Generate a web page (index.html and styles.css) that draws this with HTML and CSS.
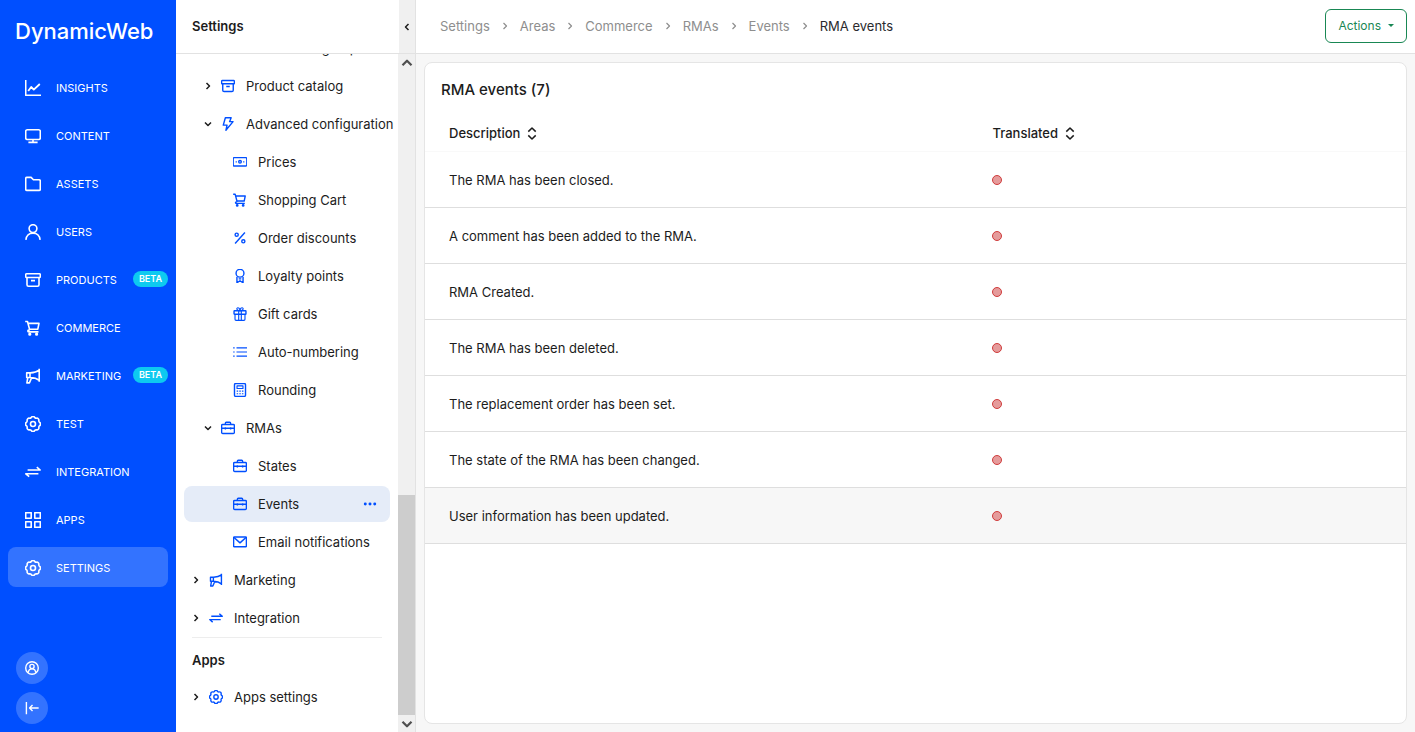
FILE: index.html
```html
<!DOCTYPE html>
<html lang="en">
<head>
<meta charset="utf-8">
<title>RMA events</title>
<link rel="stylesheet" href="styles.css">
</head>
<body>
<svg class="sprite" aria-hidden="true">
  <symbol id="insights" viewBox="0 0 16 16"><path d="M.7 0v15.2H16"/><path d="M3.2 11l3-4 2.6 2.6 6-5.6" stroke-width="1.8"/></symbol>
  <symbol id="monitor" viewBox="0 0 16 16"><rect x=".7" y="1.7" width="14.6" height="9.8" rx="1.6"/><path d="M8 11.5v2.6M3.4 14.4h9.2"/></symbol>
  <symbol id="folder" viewBox="0 0 16 16"><path d="M.7 2.6c0-.7.5-1.2 1.2-1.2h4.2l2.3 2.4h5.7c.7 0 1.2.5 1.2 1.2v8.2c0 .7-.5 1.2-1.2 1.2H1.9c-.7 0-1.2-.5-1.2-1.2z"/></symbol>
  <symbol id="user" viewBox="0 0 16 16"><circle cx="8" cy="4.6" r="3.9"/><path d="M.9 15.8c.4-4 3.2-6.700 7.100-6.700s6.700 2.700 7.100 6.700"/></symbol>
  <symbol id="archive" viewBox="0 0 16 16"><rect x=".7" y="1.7" width="14.6" height="3.8" rx=".9"/><path d="M2 5.600v7.200c0 .9.600 1.500 1.500 1.500h9c.9 0 1.500-.6 1.500-1.500V5.600M6 8.600h4"/></symbol>
  <symbol id="cart" viewBox="0 0 16 16"><path d="M.2 1.500h2.300l2 7.600c.2.500-.2.900-.7 1-1.300.2-1.300 1.800 0 1.800h9.700M3 3.400h11l-1.200 5.800H4.500"/><circle cx="4.800" cy="14.200" r=".8"/><circle cx="11.600" cy="14.200" r=".8"/></symbol>
  <symbol id="megaphone" viewBox="0 0 16 16"><path d="M14.200.8v13M14.200 2.200C11.500 4.300 8.700 4.800 5.200 4.900H1.700v4.600h3.500c3.500.1 6.300.7 9 2.900M5 4.900v4.600M2.800 9.500l-.9 5.400h2.500l2.200-5.200"/></symbol>
  <symbol id="gear" viewBox="0 0 16 16"><path d="M6.200 1.600a2 2 0 0 1 3.600 0 2 2 0 0 0 1.500.6 2 2 0 0 1 2.500 2.500 2 2 0 0 0 .6 1.500 2 2 0 0 1 0 3.600 2 2 0 0 0-.6 1.500 2 2 0 0 1-2.500 2.500 2 2 0 0 0-1.500.6 2 2 0 0 1-3.600 0 2 2 0 0 0-1.500-.6 2 2 0 0 1-2.500-2.500 2 2 0 0 0-.6-1.500 2 2 0 0 1 0-3.600 2 2 0 0 0 .6-1.500 2 2 0 0 1 2.500-2.500 2 2 0 0 0 1.500-.6z"/><circle cx="8" cy="8" r="2.500"/></symbol>
  <symbol id="swap" viewBox="0 0 16 16"><path d="M2.600 6H15.200L11.800 3.100M13.400 9.800H.8l3.400 2.900"/></symbol>
  <symbol id="grid" viewBox="0 0 16 16"><path d="M.7.7h5.500v5.500H.7zM9.800.7h5.500v5.500H9.800zM.7 9.800h5.500v5.500H.7zM9.800 9.800h5.500v5.500H9.800z"/></symbol>
  <symbol id="profile" viewBox="0 0 16 16"><circle cx="8" cy="8" r="7.200"/><circle cx="8" cy="6.300" r="2.400"/><path d="M3.700 13.200c.3-2.500 2-4.200 4.300-4.200s4 1.700 4.300 4.200"/></symbol>
  <symbol id="collapse" viewBox="0 0 16 16"><path d="M1.600 1v14M15.600 8H5.600M8.600 4.600L5.200 8l3.400 3.400"/></symbol>
  <symbol id="bolt" viewBox="0 0 16 16"><path d="M5 .8h6.600L9.800 5.300h4L5.600 15.200l1.300-5.900H2.600z"/></symbol>
  <symbol id="money" viewBox="0 0 16 16"><rect x=".2" y="3" width="15.600" height="9.600" rx="1.200"/><circle cx="8" cy="7.800" r="1.500"/><path d="M3 7.800h1.400M11.600 7.800H13"/></symbol>
  <symbol id="percent" viewBox="0 0 16 16"><path d="M13.600 1.800L2.400 14.200"/><circle cx="4.200" cy="4.200" r="1.800"/><circle cx="11.800" cy="11.800" r="1.800"/></symbol>
  <symbol id="award" viewBox="0 0 16 16"><circle cx="8" cy="4.800" r="4.500"/><path d="M4.500 9v6.800L8 13.400l3.500 2.400V9M6.500 11.300h3"/></symbol>
  <symbol id="gift" viewBox="0 0 16 16"><rect x="1.200" y="4.300" width="13.600" height="3.900" rx=".6"/><path d="M2.300 8.200v5.900c0 .7.500 1.200 1.200 1.200h9c.7 0 1.200-.5 1.200-1.200V8.200M6.500 4.300v11M9.500 4.300v11M7.800 4.300C3.500 4 3.800.9 5.600.9c1.500 0 2.200 1.500 2.400 3.400C8.200 2.400 8.900.9 10.400.9c1.800 0 2.100 3.100-2.200 3.400" stroke-width="1.300"/></symbol>
  <symbol id="list" viewBox="0 0 16 16"><path d="M4 3.300h12M4 8h12M4 12.700h12M.2 3.300h1.700M.2 8h1.700M.2 12.700h1.700" stroke-width="1.200"/></symbol>
  <symbol id="calculator" viewBox="0 0 16 16"><rect x="1.700" y=".7" width="12.600" height="14.600" rx="1.200"/><path d="M4.600 3.300h6.800v3H4.600zM4.200 9.300h1.700M7.200 9.300h1.700M10.200 9.300h1.700M4.200 12.300h1.700M7.200 12.300h1.700M10.200 12.300h1.700" stroke-width="1.300"/></symbol>
  <symbol id="briefcase" viewBox="0 0 16 16"><rect x=".7" y="4" width="14.600" height="10.200" rx="1.200"/><path d="M5 4V2.500c0-.6.400-1 1-1h4c.6 0 1 .4 1 1V4M.7 8.300h14.600M5 7v2.800M11 7v2.800"/></symbol>
  <symbol id="mail" viewBox="0 0 16 16"><rect x=".7" y="2.200" width="14.600" height="11.200" rx=".8"/><path d="M1.200 2.800L8 9l6.800-6.200"/></symbol>
  <symbol id="dots" viewBox="0 0 16 16"><g fill="currentColor" stroke="none"><circle cx="2.600" cy="8" r="1.700"/><circle cx="8" cy="8" r="1.700"/><circle cx="13.400" cy="8" r="1.700"/></g></symbol>
  <symbol id="chevron" viewBox="0 0 8 8"><path d="M2.500 1L5.500 4l-3 3"/></symbol>
  <symbol id="sort" viewBox="0 0 10 14"><path d="M1 5l4-4 4 4M1 9l4 4 4-4"/></symbol>
</svg>

<div class="app">
  <nav class="rail" aria-label="Areas">
    <a class="logo" href="#">DynamicWeb</a>
    <ul class="rail-list">
      <li><a class="rail-item" href="#"><svg class="icon"><use href="#insights"/></svg>INSIGHTS</a></li>
      <li><a class="rail-item" href="#"><svg class="icon"><use href="#monitor"/></svg>CONTENT</a></li>
      <li><a class="rail-item" href="#"><svg class="icon"><use href="#folder"/></svg>ASSETS</a></li>
      <li><a class="rail-item" href="#"><svg class="icon"><use href="#user"/></svg>USERS</a></li>
      <li><a class="rail-item" href="#"><svg class="icon"><use href="#archive"/></svg>PRODUCTS<span class="badge">BETA</span></a></li>
      <li><a class="rail-item" href="#"><svg class="icon"><use href="#cart"/></svg>COMMERCE</a></li>
      <li><a class="rail-item" href="#"><svg class="icon"><use href="#megaphone"/></svg>MARKETING<span class="badge">BETA</span></a></li>
      <li><a class="rail-item" href="#"><svg class="icon"><use href="#gear"/></svg>TEST</a></li>
      <li><a class="rail-item" href="#"><svg class="icon"><use href="#swap"/></svg>INTEGRATION</a></li>
      <li><a class="rail-item" href="#"><svg class="icon"><use href="#grid"/></svg>APPS</a></li>
      <li><a class="rail-item active" href="#" aria-current="page"><svg class="icon"><use href="#gear"/></svg>SETTINGS</a></li>
    </ul>
    <div class="rail-foot">
      <button class="round" type="button" aria-label="Profile"><svg class="icon"><use href="#profile"/></svg></button>
      <button class="round" type="button" aria-label="Collapse menu"><svg class="icon"><use href="#collapse"/></svg></button>
    </div>
  </nav>

  <aside class="panel">
    <header class="panel-head">
      <h2 class="panel-title">Settings</h2>
      <button class="panel-toggle" type="button" aria-label="Hide panel"><svg class="icon chevron left"><use href="#chevron"/></svg></button>
    </header>
    <div class="panel-body">
      <div class="tree">
        <a class="row level-2" href="#"><span class="twist"></span><svg class="icon"><use href="#mail"/></svg>Validation groups</a>
        <a class="row level-1" href="#"><span class="twist"><svg class="icon chevron"><use href="#chevron"/></svg></span><svg class="icon"><use href="#archive"/></svg>Product catalog</a>
        <a class="row level-1" href="#"><span class="twist"><svg class="icon chevron down"><use href="#chevron"/></svg></span><svg class="icon"><use href="#bolt"/></svg>Advanced configuration</a>
        <a class="row level-2" href="#"><span class="twist"></span><svg class="icon"><use href="#money"/></svg>Prices</a>
        <a class="row level-2" href="#"><span class="twist"></span><svg class="icon"><use href="#cart"/></svg>Shopping Cart</a>
        <a class="row level-2" href="#"><span class="twist"></span><svg class="icon"><use href="#percent"/></svg>Order discounts</a>
        <a class="row level-2" href="#"><span class="twist"></span><svg class="icon"><use href="#award"/></svg>Loyalty points</a>
        <a class="row level-2" href="#"><span class="twist"></span><svg class="icon"><use href="#gift"/></svg>Gift cards</a>
        <a class="row level-2" href="#"><span class="twist"></span><svg class="icon"><use href="#list"/></svg>Auto-numbering</a>
        <a class="row level-2" href="#"><span class="twist"></span><svg class="icon"><use href="#calculator"/></svg>Rounding</a>
        <a class="row level-1" href="#"><span class="twist"><svg class="icon chevron down"><use href="#chevron"/></svg></span><svg class="icon"><use href="#briefcase"/></svg>RMAs</a>
        <a class="row level-2" href="#"><span class="twist"></span><svg class="icon"><use href="#briefcase"/></svg>States</a>
        <div class="row level-2 selected"><span class="twist"></span><svg class="icon"><use href="#briefcase"/></svg><a class="row-link" href="#" aria-current="page">Events</a><button class="more" type="button" aria-label="More"><svg class="icon"><use href="#dots"/></svg></button></div>
        <a class="row level-2" href="#"><span class="twist"></span><svg class="icon"><use href="#mail"/></svg>Email notifications</a>
        <a class="row" href="#"><span class="twist"><svg class="icon chevron"><use href="#chevron"/></svg></span><svg class="icon"><use href="#megaphone"/></svg>Marketing</a>
        <a class="row" href="#"><span class="twist"><svg class="icon chevron"><use href="#chevron"/></svg></span><svg class="icon"><use href="#swap"/></svg>Integration</a>
        <h3 class="tree-heading">Apps</h3>
        <a class="row" href="#"><span class="twist"><svg class="icon chevron"><use href="#chevron"/></svg></span><svg class="icon"><use href="#gear"/></svg>Apps settings</a>
      </div>
      <div class="scrollbar">
        <button class="scroll-arrow" type="button" aria-label="Scroll up"><svg class="icon chevron up"><use href="#chevron"/></svg></button>
        <div class="scroll-track"><div class="scroll-thumb"></div></div>
        <button class="scroll-arrow" type="button" aria-label="Scroll down"><svg class="icon chevron down"><use href="#chevron"/></svg></button>
      </div>
    </div>
  </aside>

  <div class="content">
    <header class="topbar">
      <nav class="crumbs" aria-label="Breadcrumb">
        <a href="#">Settings</a><svg class="icon chevron"><use href="#chevron"/></svg>
        <a href="#">Areas</a><svg class="icon chevron"><use href="#chevron"/></svg>
        <a href="#">Commerce</a><svg class="icon chevron"><use href="#chevron"/></svg>
        <a href="#">RMAs</a><svg class="icon chevron"><use href="#chevron"/></svg>
        <a href="#">Events</a><svg class="icon chevron"><use href="#chevron"/></svg>
        <span class="current">RMA events</span>
      </nav>
      <button class="actions" type="button">Actions<span class="caret"></span></button>
    </header>
    <main class="main">
      <section class="card">
        <h1 class="card-title">RMA events (7)</h1>
        <table class="table">
          <thead>
            <tr>
              <th scope="col"><button class="sort" type="button">Description<svg class="icon"><use href="#sort"/></svg></button></th>
              <th scope="col"><button class="sort" type="button">Translated<svg class="icon"><use href="#sort"/></svg></button></th>
            </tr>
          </thead>
          <tbody>
            <tr><td>The RMA has been closed.</td><td><span class="status"></span></td></tr>
            <tr><td>A comment has been added to the RMA.</td><td><span class="status"></span></td></tr>
            <tr><td>RMA Created.</td><td><span class="status"></span></td></tr>
            <tr><td>The RMA has been deleted.</td><td><span class="status"></span></td></tr>
            <tr><td>The replacement order has been set.</td><td><span class="status"></span></td></tr>
            <tr><td>The state of the RMA has been changed.</td><td><span class="status"></span></td></tr>
            <tr class="hovered"><td>User information has been updated.</td><td><span class="status"></span></td></tr>
          </tbody>
        </table>
      </section>
    </main>
  </div>
</div>
</body>
</html>
```
FILE: styles.css
```css
* {
  box-sizing: border-box;
}

body {
  margin: 0;
  font-family: Inter, "Liberation Sans", sans-serif;
  font-size: 13px;
  line-height: 20px;
  color: #1c1c1c;
  background: #fff;
}

a {
  color: inherit;
  text-decoration: none;
}

button {
  margin: 0;
  padding: 0;
  border: 0;
  background: none;
  color: inherit;
  font: inherit;
  cursor: pointer;
}

ul,
h1,
h2,
h3 {
  margin: 0;
  padding: 0;
  list-style: none;
}

.sprite {
  display: none;
}

.icon {
  flex: none;
  display: block;
  width: 16px;
  height: 16px;
  fill: none;
  stroke: currentColor;
  stroke-width: 1.6;
  stroke-linejoin: round;
}

.chevron {
  width: 8px;
  height: 8px;
  stroke-width: 1.5;
}

.chevron.down {
  transform: rotate(90deg);
}

.chevron.up {
  transform: rotate(-90deg);
}

.chevron.left {
  transform: rotate(180deg);
}

.app {
  display: flex;
  height: 100vh;
}

/* Blue area menu */
.rail {
  flex: none;
  width: 176px;
  display: flex;
  flex-direction: column;
  padding: 16px 8px 8px;
  color: #fff;
  background: #004fff;
}

.logo {
  padding: 0 7px;
  font-size: 22px;
  font-weight: 500;
  line-height: 31px;
}

.rail-list {
  flex: 1;
  display: flex;
  flex-direction: column;
  gap: 8px;
  padding-top: 20px;
}

.rail-item {
  display: flex;
  align-items: center;
  height: 40px;
  padding: 2px 0 0 17px;
  border-radius: 8px;
  font-size: 11px;
  line-height: 16px;
}

.rail-item .icon {
  margin-right: 15px;
}

.rail-item.active {
  background: #3373ff;
}

.badge {
  margin: 0 0 2px auto;
  padding: 0 6px;
  border-radius: 8px;
  background: #0dcaf0;
  font-size: 9px;
  font-weight: 600;
}

.rail-foot {
  display: flex;
  flex-direction: column;
  gap: 8px;
  padding-left: 8px;
}

.round {
  display: flex;
  align-items: center;
  justify-content: center;
  width: 32px;
  height: 32px;
  border-radius: 50%;
  background: #3373ff;
}

.round .icon {
  width: 14px;
  height: 14px;
}

/* Settings tree */
.panel {
  flex: none;
  width: 240px;
  display: flex;
  flex-direction: column;
  border-right: 1px solid #e2e2e2;
}

.panel-head {
  display: flex;
  height: 54px;
  border-bottom: 1px solid #e2e2e2;
}

.panel-title {
  flex: 1;
  align-self: center;
  padding: 0 0 1px 16px;
  font-size: 13px;
  font-weight: 600;
}

.panel-toggle {
  display: flex;
  align-items: center;
  justify-content: center;
  width: 16px;
  background: #f0f0f0;
}

.panel-body {
  flex: 1;
  min-height: 0;
  display: flex;
}

.tree {
  flex: 1;
  min-width: 0;
  display: flex;
  flex-direction: column;
  justify-content: flex-end;
  padding: 0 8px 16px;
  overflow: hidden;
}

.row {
  flex: none;
  display: flex;
  align-items: center;
  height: 36px;
  margin: 1px 0;
  padding-left: 4px;
  border-radius: 8px;
  white-space: nowrap;
}

.row > .icon {
  width: 14px;
  height: 14px;
  margin: 0 11px 0 5px;
  color: #004fff;
}

.level-1 {
  padding-left: 16px;
}

.level-2 {
  padding-left: 28px;
}

.selected {
  background: #e5ecf8;
}

.row-link {
  flex: 1;
}

.more {
  margin-right: 13px;
  color: #004fff;
}

.more .icon {
  width: 14px;
  height: 14px;
}

.twist {
  flex: none;
  display: flex;
  justify-content: center;
  width: 16px;
}

.tree-heading {
  flex: none;
  margin: 0 8px;
  padding: 12px 0 8px;
  border-top: 1px solid #ededed;
  font-size: 13px;
  font-weight: 600;
}

.scrollbar {
  flex: none;
  width: 17px;
  display: flex;
  flex-direction: column;
  background: #f0f0f0;
}

.scroll-arrow {
  display: flex;
  align-items: center;
  justify-content: center;
  height: 17px;
  color: #505050;
}

.scroll-arrow .chevron {
  width: 12px;
  height: 12px;
}

.scroll-track {
  flex: 1;
  display: flex;
  flex-direction: column;
  justify-content: flex-end;
}

.scroll-thumb {
  height: 34.2%;
  background: #cdcdcd;
}

/* Main area */
.content {
  flex: 1;
  min-width: 0;
  display: flex;
  flex-direction: column;
  background: #f7f7f7;
}

.topbar {
  display: flex;
  align-items: center;
  justify-content: space-between;
  height: 54px;
  padding: 0 8px 2px 24px;
  border-bottom: 1px solid #e2e2e2;
  background: #fff;
}

.crumbs {
  display: flex;
  align-items: center;
  gap: 11px;
  color: #8e8e8e;
}

.crumbs .chevron {
  stroke-width: 1.2;
}

.current {
  color: #2a2a2e;
}

.actions {
  display: flex;
  align-items: center;
  gap: 7px;
  padding: 6px 12px;
  border: 1px solid #198754;
  border-radius: 6px;
  color: #198754;
  font-size: 12px;
}

.caret {
  border: 3px solid transparent;
  border-top-color: currentColor;
  border-bottom: 0;
}

.main {
  flex: 1;
  display: flex;
  padding: 8px;
}

.card {
  flex: 1;
  border: 1px solid #e5e5e5;
  border-radius: 8px;
  background: #fff;
}

.card-title {
  padding: 17px 16px 15px;
  font-size: 15px;
  font-weight: 500;
}

.table {
  width: 100%;
  border-collapse: separate;
  border-spacing: 0;
}

.table th,
.table td {
  padding: 0 24px;
  text-align: left;
}

.table th {
  height: 37px;
  border-bottom: 1px solid #f9f9f9;
  font-weight: 500;
}

.table th:first-child {
  width: 55.4%;
}

.table td {
  height: 56px;
  border-bottom: 1px solid #dedede;
}

.hovered td {
  background: #f7f7f7;
}

.sort {
  display: flex;
  align-items: center;
  gap: 7px;
}

.sort .icon {
  width: 10px;
  height: 13px;
}

.status {
  display: block;
  width: 10px;
  height: 10px;
  border: 1px solid #d03c3c;
  border-radius: 50%;
  background: #e59b9b;
}
```
